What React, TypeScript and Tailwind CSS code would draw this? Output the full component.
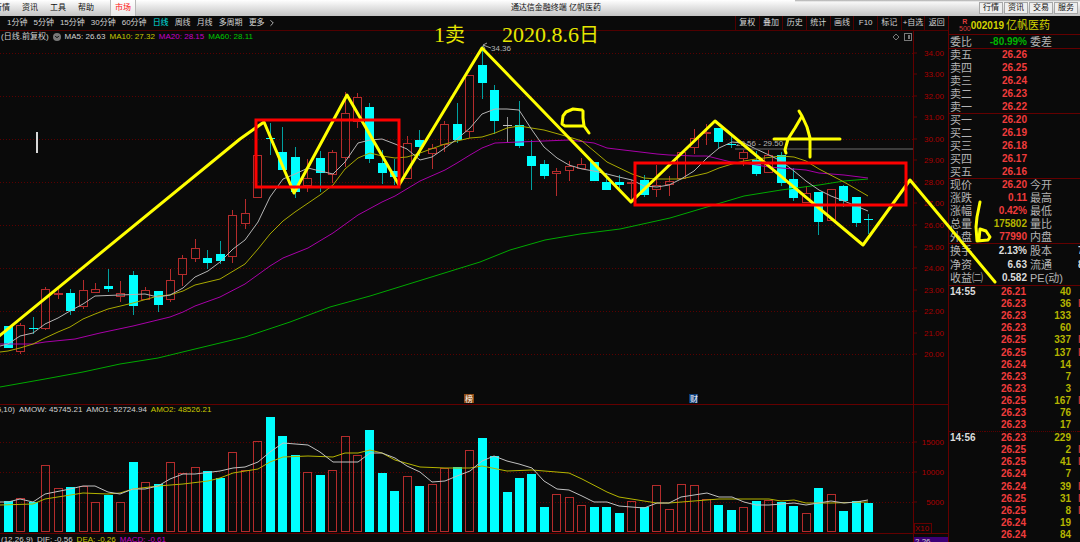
import React from 'react';
import { ChevronDown, ChevronRight } from 'lucide-react';

type Kind = 'up' | 'down' | 'flat';

// [kind, high, body top, body bottom, low, volume top]
type Candle = [Kind, number, number, number, number, number];

const STEP = 860 / 69;

const candles: Candle[] = [
  ['down', 326, 326, 348, 348, 501],
  ['up', 323, 325, 352, 354, 498],
  ['down', 317, 328, 330, 334, 502],
  ['up', 287, 289, 329, 330, 465],
  ['up', 289, 293, 294, 299, 488],
  ['down', 289, 293, 311, 315, 487],
  ['up', 280, 290, 307, 309, 486],
  ['up', 283, 289, 293, 293, 502],
  ['down', 269, 286, 289, 292, 495],
  ['up', 281, 293, 297, 302, 502],
  ['down', 271, 275, 306, 315, 462],
  ['up', 287, 290, 300, 300, 482],
  ['down', 291, 291, 305, 312, 484],
  ['up', 269, 280, 300, 302, 462],
  ['up', 255, 258, 275, 286, 473],
  ['up', 239, 248, 259, 262, 467],
  ['down', 250, 258, 263, 269, 471],
  ['down', 241, 254, 261, 264, 478],
  ['up', 210, 215, 257, 263, 452],
  ['up', 199, 213, 224, 229, 470],
  ['up', 155, 155, 198, 198, 441],
  ['down', 123, 138, 140, 155, 417],
  ['down', 127, 152, 170, 170, 436],
  ['down', 147, 157, 192, 198, 455],
  ['up', 159, 178, 186, 192, 472],
  ['down', 151, 158, 173, 192, 475],
  ['up', 150, 152, 175, 183, 470],
  ['up', 92, 113, 158, 167, 436],
  ['up', 93, 97, 122, 128, 455],
  ['down', 103, 107, 159, 163, 430],
  ['down', 150, 163, 173, 184, 473],
  ['down', 159, 171, 177, 185, 491],
  ['up', 136, 143, 179, 179, 476],
  ['down', 130, 140, 147, 156, 486],
  ['up', 144, 148, 154, 169, 484],
  ['up', 121, 124, 145, 152, 468],
  ['down', 103, 124, 140, 143, 467],
  ['up', 75, 75, 132, 138, 450],
  ['down', 46, 65, 83, 99, 438],
  ['down', 85, 90, 121, 134, 456],
  ['flat', 117, 125, 126, 143, 492],
  ['down', 101, 125, 146, 148, 478],
  ['down', 140, 156, 166, 190, 474],
  ['down', 160, 164, 176, 179, 507],
  ['up', 168, 171, 174, 196, 494],
  ['up', 161, 166, 171, 181, 497],
  ['up', 158, 164, 169, 169, 505],
  ['down', 162, 162, 181, 181, 507],
  ['down', 173, 182, 190, 190, 507],
  ['down', 175, 182, 185, 189, 513],
  ['up', 180, 182, 183, 202, 501],
  ['down', 175, 180, 195, 197, 507],
  ['up', 165, 185, 190, 197, 485],
  ['up', 176, 181, 185, 196, 509],
  ['up', 152, 152, 179, 179, 484],
  ['up', 129, 138, 148, 154, 485],
  ['up', 124, 132, 134, 145, 499],
  ['down', 128, 128, 142, 148, 505],
  ['down', 136, 144, 145, 148, 510],
  ['up', 150, 152, 159, 166, 507],
  ['down', 151, 160, 174, 176, 501],
  ['up', 150, 155, 173, 173, 500],
  ['down', 152, 155, 183, 186, 502],
  ['down', 168, 179, 198, 201, 506],
  ['up', 186, 193, 203, 203, 513],
  ['down', 192, 192, 222, 235, 488],
  ['up', 189, 189, 221, 221, 494],
  ['down', 185, 186, 201, 207, 511],
  ['down', 197, 197, 223, 227, 501],
  ['down', 214, 219, 220, 234, 503],
];

const ma5 =
  '0,346 8,344 20,336 33,333 45,324 58,318 70,311 83,304 95,296 120,295 145,294 158,297 170,295 183,288 195,277 208,271 220,262 233,249 245,240 258,222 270,197 283,179 295,174 308,168 320,171 333,174 345,162 358,143 370,140 382,139 395,144 407,149 420,160 432,157 445,148 457,139 470,128 482,114 495,109 507,109 519,110 532,130 544,147 557,158 569,165 582,169 594,171 607,174 619,177 632,180 644,186 657,187 669,185 681,179 694,171 707,158 719,148 732,142 744,143 756,149 769,155 781,161 794,171 806,181 819,190 831,196 844,201 856,206 868,211';
const ma10 =
  '0,352 8,351 20,348 33,344 45,338 58,332 70,327 83,319 95,314 108,309 133,303 158,296 170,295 183,291 195,285 220,279 245,264 258,249 270,234 283,221 295,212 320,195 333,185 345,169 358,158 370,153 382,156 395,158 407,157 420,153 445,144 457,141 470,138 482,137 495,133 507,128 519,126 544,130 569,137 582,141 594,151 607,162 632,174 644,178 657,179 681,179 694,176 707,173 719,168 732,164 744,161 756,159 781,156 794,157 806,161 819,169 844,182 856,189 868,196';
const ma20 =
  '0,344 33,344 45,342 75,339 100,333 133,326 170,317 183,312 195,306 220,297 245,284 270,266 283,258 308,248 333,233 358,215 382,202 395,196 420,181 445,170 457,163 470,155 482,148 495,143 519,142 544,141 569,140 594,143 607,148 632,151 657,154 669,155 694,156 707,156 731,162 744,163 769,167 806,170 819,173 844,175 868,178';
const ma60 =
  '0,387 45,379 83,372 120,364 158,358 195,349 220,343 245,337 290,322 330,307 370,296 425,279 480,262 510,250 545,240 580,234 620,229 670,218 707,207 744,196 781,190 819,185 844,181 868,179';
const amo1 =
  '0,502 8,502 20,499 33,502 45,494 70,489 83,486 95,486 108,492 120,494 133,489 145,489 158,486 170,479 183,474 195,474 220,471 233,468 245,467 258,462 270,452 283,443 308,445 320,452 333,462 358,462 370,453 382,453 395,458 407,466 420,472 432,482 445,481 457,476 470,471 482,461 494,456 507,461 519,464 532,468 544,481 557,489 569,490 582,496 594,502 607,502 619,506 644,508 657,503 669,503 681,497 707,493 719,497 732,497 744,502 756,505 769,505 794,503 806,505 831,501 844,503 856,502 868,500';
const amo2 =
  '0,505 33,504 45,499 83,493 108,494 120,493 133,489 158,486 183,484 208,481 220,478 233,473 258,469 270,462 283,457 308,456 333,457 345,453 358,453 370,450 382,453 395,460 420,467 445,468 470,468 482,466 507,471 532,470 569,473 582,479 607,492 619,497 644,501 657,503 669,503 694,501 719,499 769,499 781,501 794,500 806,503 831,503 868,502';

const menus = ['行情', '资讯', '工具', '帮助'];
const panels = ['行情', '资讯', '交易', '服务'];
const periods = ['1分钟', '5分钟', '15分钟', '30分钟', '60分钟', '日线', '周线', '月线', '多周期'];
const tools = ['复权', '叠加', '历史', '统计', '画线', 'F10', '标记', '+自选', '返回'];

type QuoteRow = { label: string; value: string; color: string; extra?: string; edge?: string };

const RED = 'text-[#f03c3c]';

const quoteGroups: { id: string; height: string; rows: QuoteRow[] }[] = [
  {
    id: 'ratio',
    height: 'h-[14px]',
    rows: [{ label: '委比', value: '-80.99%', color: 'text-[#00b400]', extra: '委差' }],
  },
  {
    id: 'sell',
    height: 'h-[65px]',
    rows: [
      { label: '卖五', value: '26.26', color: RED },
      { label: '卖四', value: '26.25', color: RED },
      { label: '卖三', value: '26.24', color: RED },
      { label: '卖二', value: '26.23', color: RED },
      { label: '卖一', value: '26.22', color: RED },
    ],
  },
  {
    id: 'buy',
    height: 'h-[65px]',
    rows: [
      { label: '买一', value: '26.20', color: RED },
      { label: '买二', value: '26.19', color: RED },
      { label: '买三', value: '26.18', color: RED },
      { label: '买四', value: '26.17', color: RED },
      { label: '买五', value: '26.16', color: RED },
    ],
  },
  {
    id: 'price',
    height: 'h-[65px]',
    rows: [
      { label: '现价', value: '26.20', color: RED, extra: '今开' },
      { label: '涨跌', value: '0.11', color: RED, extra: '最高' },
      { label: '涨幅', value: '0.42%', color: RED, extra: '最低' },
      { label: '总量', value: '175802', color: 'text-[#b4b400]', extra: '量比' },
      { label: '外盘', value: '77990', color: RED, extra: '内盘' },
    ],
  },
  {
    id: 'basic',
    height: 'h-[42px]',
    rows: [
      { label: '换手', value: '2.13%', color: 'text-[#dcdcdc]', extra: '股本', edge: '7' },
      { label: '净资', value: '6.63', color: 'text-[#dcdcdc]', extra: '流通', edge: '8' },
      { label: '收益㈡', value: '0.582', color: 'text-[#dcdcdc]', extra: 'PE(动)' },
    ],
  },
];

// [time, price, volume, shows the buy mark]
const ticks: [string, string, number, boolean][] = [
  ['14:55', '26.21', 40, false],
  ['', '26.23', 36, true],
  ['', '26.23', 133, false],
  ['', '26.23', 60, false],
  ['', '26.25', 337, true],
  ['', '26.25', 137, true],
  ['', '26.24', 14, false],
  ['', '26.23', 7, false],
  ['', '26.23', 3, false],
  ['', '26.25', 167, true],
  ['', '26.23', 76, false],
  ['', '26.23', 17, false],
  ['14:56', '26.23', 229, false],
  ['', '26.25', 2, true],
  ['', '26.25', 41, true],
  ['', '26.24', 7, false],
  ['', '26.24', 39, true],
  ['', '26.25', 31, true],
  ['', '26.25', 8, true],
  ['', '26.24', 19, false],
  ['', '26.24', 84, false],
];

const Header = () => (
  <header className="relative grid h-4 grid-cols-[1fr_auto_1fr] items-center bg-linear-to-b from-white to-[#c4c4c4] text-[8px] leading-4 text-[#101010]">
    <nav className="-ml-1.5 flex items-center gap-3">
      {menus.map(m => (
        <button key={m} className="whitespace-nowrap">{m}</button>
      ))}
      <button className="ml-1 h-4 border-x border-[#b8b8b8] bg-white/60 px-1 whitespace-nowrap text-[#ff1010]">市场</button>
    </nav>
    <h1 className="pl-8 whitespace-nowrap">通达信金融终端 亿帆医药</h1>
    <div className="flex justify-end gap-px pr-0.5">
      {panels.map(p => (
        <button key={p} className="h-3 w-6 border border-[#a8a8a8] bg-[#eeeeee] leading-[10px] whitespace-nowrap">{p}</button>
      ))}
    </div>
    <div className="absolute top-0 right-0 h-0.5 w-[285px] bg-linear-to-b from-[#a8a8a8] to-transparent" />
  </header>
);

const Toolbar = () => (
  <div className="flex h-[15px] border-b border-[#500000] text-[8px] leading-[14px] text-[#d2d2d2]">
    <nav className="flex flex-1 items-center gap-1.5 pl-[7px]">
      {periods.map(p => (
        <button key={p} className={`whitespace-nowrap ${p === '日线' ? 'text-[#00e0e0]' : ''}`}>{p}</button>
      ))}
      <button className="flex items-center gap-0.5 whitespace-nowrap">
        更多
        <ChevronRight className="h-2.5 w-2.5" />
      </button>
    </nav>
    <div className="grid w-[213px] grid-cols-9">
      {tools.map(t => (
        <button key={t} className="border-l border-[#500000] whitespace-nowrap">{t}</button>
      ))}
    </div>
  </div>
);

const GridLine = ({ y }: { y: number }) => (
  <line x1="0" y1={y} x2="913" y2={y} stroke="#5a0000" strokeDasharray="1 2" shapeRendering="crispEdges" />
);

const PriceChart = () => (
  <svg viewBox="0 43 948 361" className="relative z-10 block w-full overflow-visible pointer-events-none" aria-label="日线">
    {Array.from({ length: 15 }, (_, i) => {
      const y = Math.round(52.5 + i * 21.57);
      return (
        <g key={i}>
          {i % 2 === 0 && <GridLine y={y} />}
          <line x1="914" y1={y} x2="917" y2={y} stroke="#640000" />
          <text x="944" y={y + 3} textAnchor="end" fontSize="8" fill="#aa0000">{(34 - i).toFixed(2)}</text>
        </g>
      );
    })}
    <line x1="913.5" y1="31" x2="913.5" y2="404" stroke="#640000" />

    <g shapeRendering="crispEdges">
      {candles.map(([kind, high, top, bottom, low], i) => {
        const x = Math.floor(8.5 + i * STEP);
        const thin = bottom - top <= 2;
        if (kind === 'up') {
          return (
            <g key={i} stroke="#b42c2c" fill="none">
              {high < top && <line x1={x + 0.5} y1={high} x2={x + 0.5} y2={top} />}
              {low > bottom && <line x1={x + 0.5} y1={bottom} x2={x + 0.5} y2={low} />}
              <rect x={x - 3.5} y={top + 0.5} width="8" height={Math.max(bottom - top - 1, 1)} />
            </g>
          );
        }
        const color = kind === 'flat' ? '#c0c0c0' : '#00ffff';
        return (
          <g key={i} fill={color}>
            <rect x={x} y={high} width="1" height={low - high} fill={kind === 'flat' ? '#909090' : '#00a0a0'} />
            <rect x={x - 4} y={top} width="9" height={thin ? 1 : bottom - top} />
          </g>
        );
      })}
    </g>

    <g fill="none" strokeWidth="1">
      <polyline points={ma60} stroke="#00a800" />
      <polyline points={ma20} stroke="#a800a8" />
      <polyline points={ma10} stroke="#a8a800" />
      <polyline points={ma5} stroke="#b4b4b4" />
    </g>

    <path d="M483 45 L491 48 M483 45 L487 43 M483 45 L485 49" stroke="#a0a0a0" fill="none" />
    <text x="491" y="51" fontSize="8" fill="#b4b4b4">34.36</text>
    <line x1="735" y1="149" x2="913" y2="149" stroke="#6c6c6c" />
    <text x="736" y="146" fontSize="8" fill="#b4b4b4">29.56 - 29.50</text>
    <rect x="36" y="132" width="2" height="21" fill="#d8d8d8" />

    <rect x="464" y="394" width="10" height="9" fill="#8c4a14" />
    <text x="465" y="402" fontSize="8" fill="#ffffff">榜</text>
    <rect x="689" y="394" width="9" height="9" fill="#0c3c78" />
    <text x="690" y="402" fontSize="8" fill="#ffffff">财</text>

    {/* hand drawn analysis */}
    <g fill="none" stroke="#ffff00" strokeWidth="3" strokeLinejoin="round" strokeLinecap="round">
      <polyline points="-2,337 240,139 264,122 294,193 347,95 399,185 482,48 631,202 715,121 863,245 910,180 995,282" />
      <path d="M582 110 L573 109 L566 112 L563 116 L562 124 L565 126 L584 126 L583 118 L583 111 M584 126 L589 133" />
      <path d="M786 153 L785 150 L788 139 L795 128 L802 116 L799 111 M802 116 L807 127 L810 138 L810 157 M774 139 L840 139" />
      <path d="M980 202 L977 217 L976 227 L977 241 L988 240 L990 237 L986 231 L980 229 L979 239" />
    </g>
    <g fill="none" stroke="#ff0000" strokeWidth="3">
      <rect x="256" y="120" width="143" height="67" />
      <rect x="635" y="163" width="271" height="42" />
    </g>
    <g fontSize="22" fill="#e6e600" className="font-['Liberation_Serif','Noto_Sans_CJK_SC',serif]">
      <text x="434" y="42">1<tspan fontSize="20">卖</tspan></text>
      <text x="502" y="42">2020.8.6<tspan fontSize="20">日</tspan></text>
    </g>
  </svg>
);

const VolumeChart = () => (
  <svg viewBox="0 415 948 118" className="block w-full overflow-visible" aria-label="AMO">
    {[15000, 10000, 5000].map((v, i) => {
      const y = 442 + i * 30;
      return (
        <g key={v}>
          <GridLine y={y} />
          <line x1="914" y1={y} x2="917" y2={y} stroke="#640000" />
          <text x="944" y={y + 3} textAnchor="end" fontSize="8" fill="#aa0000">{v}</text>
        </g>
      );
    })}
    <line x1="913.5" y1="405" x2="913.5" y2="542" stroke="#640000" />
    <rect x="914.5" y="523.5" width="17" height="10" fill="none" stroke="#640000" />
    <text x="915" y="531" fontSize="8" fill="#aa0000">X10</text>
    <g shapeRendering="crispEdges">
      {candles.map(([kind, , , , , top], i) => {
        const x = Math.floor(8.5 + i * STEP);
        return kind === 'up' ? (
          <rect key={i} x={x - 3.5} y={top + 0.5} width="8" height={531 - top} fill="none" stroke="#b42c2c" />
        ) : (
          <rect key={i} x={x - 4} y={top} width="9" height={532 - top} fill="#00ffff" />
        );
      })}
    </g>
    <polyline points={amo2} fill="none" stroke="#b4b400" />
    <polyline points={amo1} fill="none" stroke="#c0c0c0" />
  </svg>
);

const QuoteTable = () => (
  <>
    {quoteGroups.map(group => (
      <table key={group.id} className={`w-full table-fixed border-collapse border-t border-[#640000] leading-[12px] ${group.height}`}>
        <tbody>
          {group.rows.map(row => (
            <tr key={row.label}>
              <th className="w-9 p-0 pl-px text-left text-[11px] font-normal whitespace-nowrap text-[#b4b4b4]">{row.label}</th>
              <td className={`w-[42px] p-0 text-right text-[10px] font-bold whitespace-nowrap ${row.color}`}>{row.value}</td>
              <td className="p-0 pl-[3px] text-[11px] whitespace-nowrap text-[#b4b4b4]">{row.extra}</td>
              <td className="w-0.5 overflow-hidden p-0 text-[10px] font-bold text-[#dcdcdc]">{row.edge}</td>
            </tr>
          ))}
        </tbody>
      </table>
    ))}
  </>
);

const TickTable = () => (
  <table className="h-[256px] w-full table-fixed border-separate border-spacing-0 border-t border-[#640000] text-[10px] leading-[12px] font-bold">
    <tbody>
      {ticks.map(([time, price, volume, mark], i) => {
        const line = time && i > 0 ? 'border-t border-dotted border-[#5a0000]' : '';
        return (
          <tr key={i}>
            <td className={`w-9 p-0 pl-px text-[#dcdcdc] ${line}`}>{time}</td>
            <td className={`w-[41px] p-0 text-right text-[#f03c3c] ${line}`}>{price}</td>
            <td className={`p-0 pr-[7px] text-right text-[#b4b400] ${line}`}>{volume}</td>
            <td className={`w-0.5 overflow-hidden p-0 text-[#c83232] ${line}`}>{mark ? 'B' : ''}</td>
          </tr>
        );
      })}
    </tbody>
  </table>
);

const Sidebar = () => (
  <aside className="w-[132px] shrink-0 overflow-hidden border-l border-[#640000]">
    <div className="flex h-[18px] items-center pl-2.5 whitespace-nowrap text-[#d2d200]">
      <div className="flex flex-col items-center text-[7px] leading-[7px] text-[#dc3c3c]">
        <b>R</b>
        <span>500</span>
      </div>
      <div className="flex items-center gap-0.5">
        <span className="text-[10px] font-bold">002019</span>
        <h2 className="text-[11px]">亿帆医药</h2>
      </div>
    </div>
    <QuoteTable />
    <TickTable />
  </aside>
);

export default function App() {
  return (
    <div className="flex h-screen flex-col overflow-hidden bg-[#0a0a0a] font-['Liberation_Sans','Noto_Sans_CJK_SC',sans-serif]">
      <Header />
      <div className="flex min-h-0 flex-1">
        <main className="flex min-w-0 flex-1 flex-col">
          <Toolbar />
          <section>
            <div className="flex h-3 items-center gap-1 pl-px text-[8px] leading-3 whitespace-nowrap text-[#d2d2d2]">
              <span>(日线.前复权)</span>
              <button className="flex h-2 w-2 items-center justify-center rounded-full bg-[#787878] text-black" aria-label="指标">
                <ChevronDown className="h-1.5 w-1.5" strokeWidth={4} />
              </button>
              <span>MA5: 26.63</span>
              <span className="text-[#c8c800]">MA10: 27.32</span>
              <span className="text-[#c800c8]">MA20: 28.15</span>
              <span className="text-[#00c800]">MA60: 28.11</span>
              <svg viewBox="0 0 20 8" className="mr-9 ml-auto h-2 w-5" fill="none" stroke="#787878">
                <path d="M4 1 L7 4 L4 7 L1 4 Z" />
                <rect x="12.5" y="0.5" width="7" height="7" />
                <rect x="16" y="2" width="2" height="4" fill="#787878" stroke="none" />
              </svg>
            </div>
            <PriceChart />
          </section>
          <section className="border-t border-[#640000]">
            <div className="flex h-2.5 items-center gap-1 text-[8px] leading-[10px] whitespace-nowrap text-[#d2d2d2]">
              <span className="-ml-1.5">(5,10)</span>
              <span>AMOW: 45745.21</span>
              <span>AMO1: 52724.94</span>
              <span className="text-[#c8c800]">AMO2: 48526.21</span>
            </div>
            <VolumeChart />
          </section>
          <section className="flex min-h-0 flex-1 justify-between overflow-hidden border-t border-[#640000] text-[8px] leading-3 whitespace-nowrap text-[#d2d2d2]">
            <div className="flex gap-1 pl-px">
              <span>(12,26,9)</span>
              <span>DIF: -0.56</span>
              <span className="text-[#c8c800]">DEA: -0.26</span>
              <span className="text-[#c800c8]">MACD: -0.61</span>
            </div>
            <div className="mt-[3px] w-[34px] bg-[#3c0078] pl-px leading-[10px]">2.26</div>
          </section>
        </main>
        <Sidebar />
      </div>
    </div>
  );
}
